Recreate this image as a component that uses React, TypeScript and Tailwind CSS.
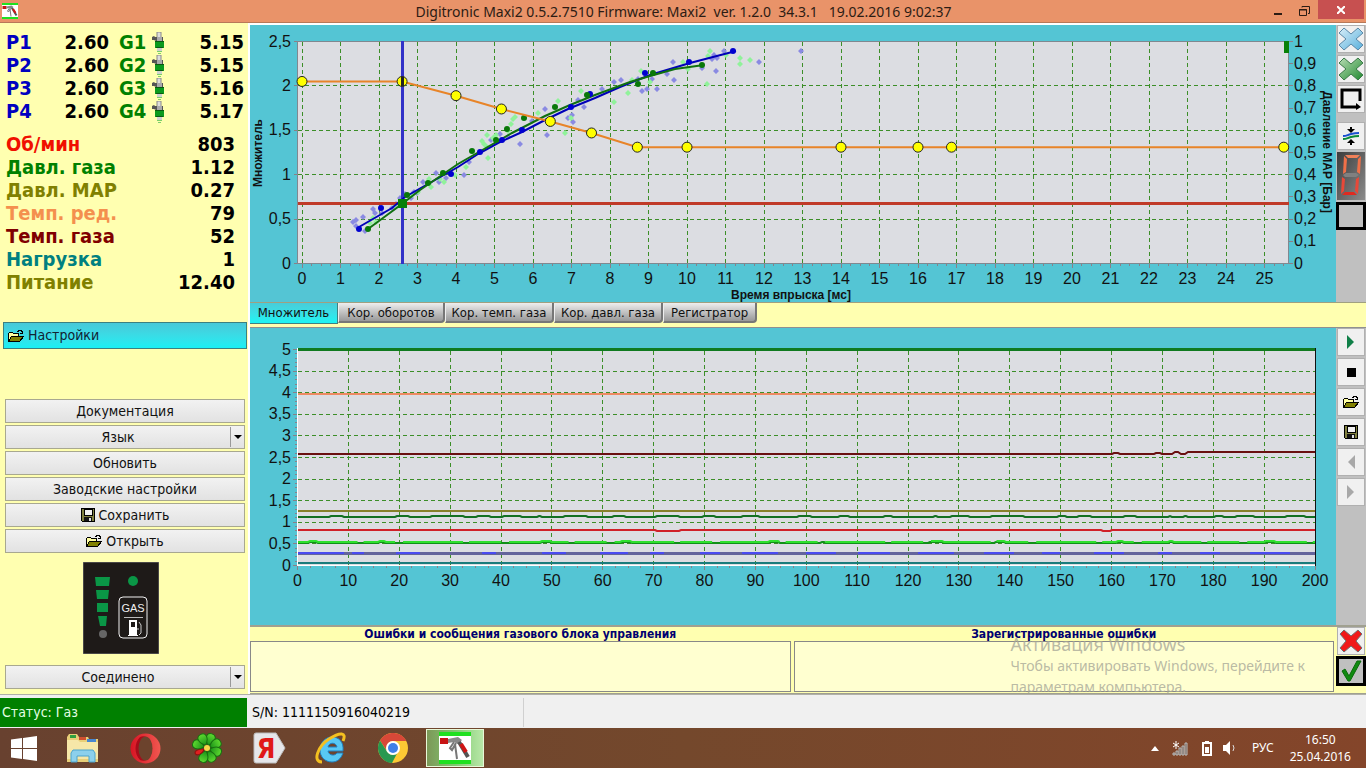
import type { ReactNode } from "react";

const UI = "font-['DejaVu_Sans_Condensed','Noto_Sans',sans-serif]";
const SEGOE = "font-['Noto_Sans','Open_Sans',sans-serif]";

type Point = [number, number];

const injectors = [
  { p: "P1", petrol: "2.60", g: "G1", gas: "5.15" },
  { p: "P2", petrol: "2.60", g: "G2", gas: "5.15" },
  { p: "P3", petrol: "2.60", g: "G3", gas: "5.16" },
  { p: "P4", petrol: "2.60", g: "G4", gas: "5.17" },
];

const readings = [
  { label: "Об/мин", value: "803", color: "text-[#f01000]" },
  { label: "Давл. газа", value: "1.12", color: "text-[#008000]" },
  { label: "Давл. МАР", value: "0.27", color: "text-[#808000]" },
  { label: "Темп. ред.", value: "79", color: "text-[#f4904e]" },
  { label: "Темп. газа", value: "52", color: "text-[#800000]" },
  { label: "Нагрузка", value: "1", color: "text-[#008080]" },
  { label: "Питание", value: "12.40", color: "text-[#808000]" },
];

/* ---------- icons ---------- */

function FolderIcon() {
  return (
    <svg width="16" height="14" viewBox="0 0 16 14" shapeRendering="crispEdges" aria-hidden="true">
      <path d="M0.5 12.5V4.5l1-1h3l1 1h5v3" fill="#ffffa0" stroke="#000" />
      <path d="M0.5 12.5l3-5h12l-4 5z" fill="#808000" stroke="#000" />
      <path d="M9 2.5h1l1-1h2l1 1v2M12 4.5h3M14.5 2v3" fill="none" stroke="#000" />
    </svg>
  );
}

function DiskIcon() {
  return (
    <svg width="14" height="14" viewBox="0 0 14 14" shapeRendering="crispEdges" aria-hidden="true">
      <path d="M0.5 0.5h13v13h-12l-1-1z" fill="#808040" stroke="#000" />
      <rect x="3" y="1" width="8" height="6" fill="#f0f0f0" stroke="#000" />
      <rect x="3" y="9" width="8" height="4" fill="#111" />
      <rect x="8" y="10" width="2" height="3" fill="#e0e0e0" />
    </svg>
  );
}

function InjectorIcon() {
  return (
    <svg width="13" height="22" viewBox="0 0 13 22" aria-hidden="true">
      <rect x="5" y="0" width="4" height="6" fill="#ddd" stroke="#888" />
      <path d="M0 5l2-1 1 1h8v4H4L2 8H0z" fill="#555" />
      <rect x="5" y="5" width="5" height="4" fill="#aaa" />
      <rect x="3" y="9" width="9" height="7" fill="#0b9a1d" />
      <path d="M3 9.500h9M4 15.500h7" stroke="#0a5a10" />
      <rect x="5" y="16" width="5" height="3" fill="#d0d0d0" />
      <path d="M5 19.500h5M6 21.500h3" stroke="#7ad06a" />
    </svg>
  );
}

function CrossIcon({ from, to, stroke, id }: { from: string; to: string; stroke: string; id: string }) {
  return (
    <svg width="26" height="26" viewBox="0 0 26 26" aria-hidden="true">
      <defs>
        <linearGradient id={id} x1="0" y1="0" x2="1" y2="1">
          <stop offset="0" stopColor={from} />
          <stop offset="1" stopColor={to} />
        </linearGradient>
      </defs>
      <path
        d="M6 2L1 7l7 6-7 6 5 5 7-6 7 6 5-5-7-6 7-6-5-5-7 6z"
        fill={`url(#${id})`}
        stroke={stroke}
        strokeLinejoin="round"
      />
    </svg>
  );
}

function LoopIcon() {
  return (
    <svg width="24" height="24" viewBox="0 0 24 24" aria-hidden="true">
      <path d="M21 14V3H3v17h15" fill="none" stroke="#000" strokeWidth="3" />
      <path d="M17 16l5 4-5 3z" fill="#000" />
    </svg>
  );
}

function MergeIcon() {
  return (
    <svg width="18" height="18" viewBox="0 0 18 18" aria-hidden="true">
      <path d="M9 0v3M9 18v-3" stroke="#000" strokeWidth="2" />
      <path d="M5 2h8L9 6zM5 16h8l-4-4z" fill="#000" />
      <path d="M1 9c4 0 4-1 8-2s4-1 8-1" fill="none" stroke="#1a4fd0" strokeWidth="2" />
      <path d="M1 12c4 0 4-1 8-2s4-1 8-1" fill="none" stroke="#0a8a3a" strokeWidth="2" />
    </svg>
  );
}

function DigitIcon() {
  return (
    <svg width="28" height="48" viewBox="0 0 28 48" aria-hidden="true">
      <defs>
        <linearGradient id="led-bg" x1="0" y1="0" x2="1" y2="1">
          <stop offset="0" stopColor="#3c3c3c" />
          <stop offset="1" stopColor="#8c8c8c" />
        </linearGradient>
      </defs>
      <rect width="28" height="48" fill="url(#led-bg)" />
      <path d="M8 3h15l-3 3h-9z" fill="#f08058" />
      <path d="M7 4l3 3-1 13-3 2zM24 4l-3 3-1 13 3 2z" fill="#f07048" />
      <path d="M6 23l3-2h10l3 2-3 2H8z" fill="#808080" />
      <path d="M5 25l3 2-1 12-3 3zM22 25l-3 2-1 12 3 3z" fill="#e84838" />
      <path d="M5 43l3-3h9l3 3z" fill="#e02a20" />
    </svg>
  );
}

function GunIcon({ size }: { size: number }) {
  return (
    <svg width={size} height={size} viewBox="0 0 32 32" aria-hidden="true">
      <rect width="32" height="32" fill="#fff" />
      <rect width="32" height="4" fill="#20e020" />
      <rect y="28" width="32" height="4" fill="#20e020" />
      <rect x="1" y="6" width="8" height="6" fill="#c81414" />
      <path d="M9 7l10-2 4 3-4 4-4-2-6 1z" fill="#888" />
      <path d="M15 10l-4 6 2 2 4-7M16 12l2 15" fill="none" stroke="#777" strokeWidth="2" />
      <path d="M20 10l9 15" stroke="#555" strokeWidth="4" />
      <path d="M22 12l5 8" stroke="#d01414" strokeWidth="4" />
    </svg>
  );
}

function FaultCrossIcon() {
  return (
    <svg width="26" height="26" viewBox="0 0 26 26" aria-hidden="true">
      <path d="M6 2L2 6l6 7-6 7 4 4 7-6 7 6 4-4-6-7 6-7-4-4-7 6z" fill="#f01818" stroke="#707070" />
    </svg>
  );
}

function CheckIcon() {
  return (
    <svg width="24" height="24" viewBox="0 0 24 24" aria-hidden="true">
      <path d="M3 12l3-2 4 7L18 2h4L11 22H9z" fill="#108a10" stroke="#0a6a0a" />
    </svg>
  );
}

/* ---------- charts ---------- */

const plotX = (v: number) => 302 + v * 38.5;
const plotY = (v: number) => 263.5 - v * 88.8;
const comma = (v: number) => String(v).replace(".", ",");
const toPoints = (pts: Point[]) => pts.map((p) => p.join(",")).join(" ");

const multiplier: Point[] = [
  [0, 2.05], [2.6, 2.05], [4, 1.89], [5.18, 1.74], [6.45, 1.6], [7.52, 1.47],
  [8.71, 1.31], [10, 1.31], [14, 1.31], [16, 1.31], [16.87, 1.31], [25.5, 1.31],
];

const petrolCurve: Point[] = [
  [359, 227], [392, 208], [405, 197], [458, 167], [478, 154], [498, 143], [522, 132],
  [545, 120], [568, 109], [595, 98], [620, 87], [650, 75], [690, 63], [736, 51],
];
const gasCurve: Point[] = [
  [368, 229], [402, 204], [420, 190], [458, 164], [498, 141], [512, 133],
  [545, 116], [570, 105], [595, 95], [630, 82], [650, 76], [675, 69], [704, 65],
];
const petrolDots: Point[] = [
  [359, 229], [381, 208], [451, 174], [480, 152], [502, 140], [522, 130], [571, 107], [590, 94], [645, 73], [689, 62], [733, 51],
];
const gasDots: Point[] = [
  [368, 229], [407, 195], [428, 183], [443, 173], [472, 151], [496, 140], [507, 129], [524, 118], [555, 107], [587, 95], [638, 84], [653, 73], [702, 65],
];
const petrolCloud: Point[] = [
  [353, 222], [356, 220], [363, 217], [356, 226], [365, 231], [373, 209], [375, 213], [392, 208], [396, 204], [400, 198], [405, 194], [414, 192],
  [423, 182], [429, 183], [436, 173], [439, 182], [446, 178], [464, 175], [469, 162], [491, 140], [500, 134], [508, 137], [520, 144], [532, 121],
  [545, 109], [547, 135], [568, 118], [572, 115], [573, 122], [578, 100], [584, 107], [602, 89], [614, 82], [621, 80], [638, 79], [642, 91],
  [647, 89], [657, 89], [652, 79], [667, 74], [674, 80], [673, 62], [702, 68], [712, 59], [716, 71], [714, 55], [717, 58], [724, 51],
  [759, 62], [801, 51], [382, 213], [411, 198], [417, 193],
];
const gasCloud: Point[] = [
  [370, 223], [373, 218], [376, 222], [395, 205], [412, 195], [418, 192], [429, 179], [431, 187], [440, 179], [444, 182], [455, 175], [466, 167],
  [482, 141], [484, 144], [487, 135], [487, 147], [488, 158], [493, 138], [496, 135], [508, 131], [511, 124], [513, 119], [515, 117], [538, 113],
  [558, 101], [565, 133], [571, 118], [581, 91], [614, 102], [628, 93], [632, 80], [641, 71], [650, 82], [683, 62], [688, 69], [707, 84],
  [708, 56], [710, 51], [740, 58], [740, 64], [750, 60], [726, 55],
];

// small rhombus marker centred on a point
const rhombs = (pts: Point[], r: number) =>
  pts.map(([x, y]) => `M${x - r} ${y}L${x} ${y - r}L${x + r} ${y}L${x} ${y + r}z`).join("");

function MultiplierChart() {
  const xs = Array.from({ length: 26 }, (_, i) => i);
  const left = [0, 0.5, 1, 1.5, 2, 2.5];
  const right = Array.from({ length: 11 }, (_, i) => i / 10);
  return (
    <svg
      viewBox="250 25 1086 277"
      className="block h-auto w-full bg-[#54c5d4] font-['Liberation_Sans',Arial,sans-serif]"
      role="img"
      aria-label="Множитель"
    >
      <rect x="297.500" y="41.500" width="991" height="222" fill="#dcdde2" stroke="#808890" />
      <g stroke="#3c8e28" strokeDasharray="4 3" shapeRendering="crispEdges">
        {xs.map((v) => <line key={v} x1={plotX(v)} x2={plotX(v)} y1="42" y2="263" />)}
        {left.slice(1, 5).map((v) => <line key={v} x1="298" x2="1288" y1={plotY(v)} y2={plotY(v)} />)}
      </g>
      <g stroke="#8a7f88" shapeRendering="crispEdges">
        {Array.from({ length: 103 }, (_, i) => (
          <line key={i} x1={plotX(i / 4)} x2={plotX(i / 4)} y1="264" y2={i % 4 ? 266 : 268} />
        ))}
        {left.map((v) => <line key={v} x1="294" x2="297" y1={plotY(v)} y2={plotY(v)} />)}
        {right.map((v) => <line key={v} x1="1289" x2="1293" y1={plotY(v * 2.5)} y2={plotY(v * 2.5)} />)}
      </g>
      <g fontSize="16" fill="#111">
        {xs.map((v) => <text key={v} x={plotX(v)} y="284" textAnchor="middle">{v}</text>)}
        {left.map((v) => <text key={v} x="291" y={plotY(v) + 5} textAnchor="end">{comma(v)}</text>)}
        {right.map((v) => <text key={v} x="1294" y={plotY(v * 2.5) + 5}>{comma(v)}</text>)}
      </g>
      <g fontSize="12" fontWeight="bold" fill="#111">
        <text x="791" y="299" textAnchor="middle">Время впрыска [мс]</text>
        <text transform="translate(262 153) rotate(-90)" textAnchor="middle">Множитель</text>
        <text transform="translate(1323 152) rotate(90)" textAnchor="middle">Давление МАР [Бар]</text>
      </g>
      <path d={rhombs(petrolCloud, 3)} fill="#8a8ae2" />
      <path d={rhombs(gasCloud, 3)} fill="#90f29a" />
      <line x1="298" x2="1289" y1="203.500" y2="203.500" stroke="#c03a28" strokeWidth="3" />
      <line x1="402.500" x2="402.500" y1="41" y2="264" stroke="#3232c8" strokeWidth="3" />
      <polyline points={toPoints(petrolCurve)} fill="none" stroke="#0000b8" strokeWidth="2" />
      <polyline points={toPoints(gasCurve)} fill="none" stroke="#107010" strokeWidth="2" />
      {petrolDots.map(([x, y]) => <circle key={x} cx={x} cy={y} r="3" fill="#0000d0" />)}
      {gasDots.map(([x, y]) => <circle key={x} cx={x} cy={y} r="3" fill="#087808" />)}
      <rect x="398" y="199" width="9" height="9" fill="#088008" />
      <rect x="1284" y="41" width="5" height="12" fill="#088008" />
      <polyline points={toPoints(multiplier.map(([x, y]) => [plotX(x), plotY(y)]))} fill="none" stroke="#e88428" strokeWidth="2" />
      {multiplier.map(([x, y]) => (
        <circle key={x} cx={plotX(x)} cy={plotY(y)} r="5" fill="#ffff00" stroke="#222" />
      ))}
      <line x1="402.500" x2="402.500" y1="77" y2="86" stroke="#222" strokeWidth="3" />
    </svg>
  );
}

const logX = (v: number) => 297.5 + v * 5.0875;
const logY = (v: number) => 565.5 - v * 43.2;

const gasPressureBumps: Point[] = [
  [329, 344], [395, 410], [430, 465], [476, 491], [502, 522], [537, 542], [563, 588], [612, 626], [655, 680], [702, 716], [741, 760], [797, 812], [838, 850],
  [883, 893], [933, 938], [950, 970], [990, 1025], [1057, 1067], [1077, 1092], [1123, 1137], [1168, 1172], [1183, 1188], [1214, 1224], [1235, 1255], [1285, 1306],
];
const gasTimeBumps: Point[] = [
  [308, 318], [378, 386], [540, 552], [620, 632], [768, 780], [820, 826], [928, 944], [994, 1006], [1116, 1124], [1168, 1174], [1264, 1276],
];
const petrolSegments: Point[] = [
  [298, 344], [352, 364], [396, 420], [482, 496], [542, 566], [600, 628], [650, 664], [700, 720], [742, 778], [806, 836], [858, 890],
  [918, 954], [984, 1014], [1042, 1060], [1094, 1124], [1158, 1172], [1200, 1220], [1250, 1290],
];

function wave(base: number, bumps: Point[], lift: number) {
  return `M298 ${base}` + bumps.map(([a, b]) => `H${a}l2 ${-lift}H${b - 2}l2 ${lift}`).join("") + "H1315";
}

function RecorderChart() {
  const xs = Array.from({ length: 21 }, (_, i) => i * 10);
  const ys = Array.from({ length: 11 }, (_, i) => i / 2);
  return (
    <svg
      viewBox="250 328 1086 297"
      className="block h-auto w-full bg-[#54c5d4] font-['Liberation_Sans',Arial,sans-serif]"
      role="img"
      aria-label="Регистратор"
    >
      <rect x="298" y="348" width="1017" height="217" fill="#dcdde2" />
      <g stroke="#3c8e28" strokeDasharray="4 3" shapeRendering="crispEdges">
        {xs.slice(1, 20).map((v) => <line key={v} x1={logX(v)} x2={logX(v)} y1="351" y2="565" />)}
        {ys.slice(1, 10).map((v) => <line key={v} x1="298" x2="1315" y1={logY(v)} y2={logY(v)} />)}
      </g>
      <g stroke="#8a7f88" shapeRendering="crispEdges">
        {Array.from({ length: 81 }, (_, i) => (
          <line key={i} x1={logX(i * 2.5)} x2={logX(i * 2.5)} y1="566" y2={i % 4 ? 568 : 570} />
        ))}
        {Array.from({ length: 51 }, (_, i) => (
          <line key={i} x1={i % 5 ? 295 : 293} x2="297" y1={logY(i / 10)} y2={logY(i / 10)} />
        ))}
      </g>
      <path d="M297.500 348v218M297 565.500h1018" stroke="#fff" fill="none" />
      <path d="M1315.500 348v218" stroke="#111" />
      <g fontSize="16" fill="#111">
        {xs.map((v) => <text key={v} x={logX(v)} y="586" textAnchor="middle">{v}</text>)}
        {ys.map((v) => <text key={v} x="291" y={logY(v) + 5} textAnchor="end">{comma(v)}</text>)}
      </g>
      <g fill="none" strokeWidth="2">
        <path d="M298 349.500H1315" stroke="#107a20" strokeWidth="3" />
        <path d="M298 394H1315" stroke="#ee8a62" />
        <path d="M298 454H1112l2-1h4l2 1h34l2-1h4l2 1h10l3-2h3l3 2h4l3-2H1315" stroke="#6a1010" />
        <path d="M298 511H1315" stroke="#86802a" />
        <path d={wave(517, gasPressureBumps, 1)} stroke="#127022" />
        <path d="M298 530H655l2 1h22l2-1H1101l2 1h7l2-1H1315" stroke="#d02028" />
        <path d={wave(543, gasTimeBumps, 1)} stroke="#109018" />
        <path d={wave(542, gasTimeBumps, 1)} stroke="#2ee02e" strokeDasharray="60 6 32 8" />
        <path d="M298 553.500H1315" stroke="#64649c" strokeWidth="3" />
        <path d={petrolSegments.map(([a, b]) => `M${a} 553H${b}`).join("")} stroke="#4a4af0" />
        <path d="M298 563H1315" stroke="#1a7c7c" />
      </g>
    </svg>
  );
}

/* ---------- controls ---------- */

function PanelButton({ children, menu }: { children: ReactNode; menu?: boolean }) {
  return (
    <button
      type="button"
      className="flex h-6 w-full items-center border border-[#a8a890] bg-linear-to-b from-[#f2f2f2] to-[#e2e2e2] text-[14px] text-[#111]"
    >
      <span className="flex flex-1 items-center justify-center gap-1">{children}</span>
      {menu && (
        <span className="flex h-5 w-[14px] items-center justify-center border-l border-[#999]">
          <svg width="8" height="4" viewBox="0 0 8 4" aria-hidden="true"><path d="M0 0h8L4 4z" /></svg>
        </span>
      )}
    </button>
  );
}

function ToolButton({ label, children }: { label: string; children: ReactNode }) {
  return (
    <button
      type="button"
      aria-label={label}
      className="flex h-7 w-7 items-center justify-center border border-[#b0b0b0] bg-[#f0f0f0]"
    >
      {children}
    </button>
  );
}

function Sidebar() {
  return (
    <aside className="w-[248px] shrink-0 bg-[#ffffb0] pt-2 pr-[3px] pl-[5px]">
      <table className="w-full table-fixed text-[20px] leading-[23px] font-bold">
        <tbody>
          {injectors.map((row) => (
            <tr key={row.p}>
              <th scope="row" className="w-[38px] p-0 pl-px text-left text-[#0000c0]">{row.p}</th>
              <td className="w-[66px] p-0 text-right">{row.petrol}</td>
              <th scope="row" className="w-[43px] p-0 pl-[10px] text-left text-[#008000]">{row.g}</th>
              <td className="w-[18px] p-0"><InjectorIcon /></td>
              <td className="p-0 pr-px text-right">{row.gas}</td>
            </tr>
          ))}
        </tbody>
      </table>
      <table className="mt-[10px] w-full text-[20px] leading-[23px] font-bold">
        <tbody>
          {readings.map((row) => (
            <tr key={row.label}>
              <th scope="row" className={`p-0 pl-px text-left ${row.color}`}>{row.label}</th>
              <td className="p-0 pr-[10px] text-right">{row.value}</td>
            </tr>
          ))}
        </tbody>
      </table>
      <button
        type="button"
        className="-mx-[2px] mt-7 flex h-[27px] w-[244px] items-center gap-1 border border-[#3c8080] bg-linear-to-b from-[#48c8d8] to-[#18f0f4] pl-1 text-[14px] text-[#123]"
      >
        <FolderIcon />
        Настройки
      </button>
      <div className="mt-[50px] flex flex-col gap-[2px]">
        <PanelButton>Документация</PanelButton>
        <PanelButton menu>Язык</PanelButton>
        <PanelButton>Обновить</PanelButton>
        <PanelButton>Заводские настройки</PanelButton>
        <PanelButton><DiskIcon />Сохранить</PanelButton>
        <PanelButton><FolderIcon />Открыть</PanelButton>
      </div>
      <div className="mt-[9px] mb-[11px] flex justify-center pr-2">
        <svg width="76" height="92" viewBox="0 0 76 92" role="img" aria-label="GAS">
          <rect width="76" height="92" fill="#1e1a18" stroke="#777" />
          <g fill="#0a9646">
            <path d="M12 15h15l-1 9H13zM13 28h13l-1 9H14zM14 41h11v9H14zM15 54h9l-1 10h-6z" />
            <circle cx="50" cy="19" r="5" />
          </g>
          <circle cx="20" cy="72" r="4" fill="#666" />
          <rect x="36" y="35" width="28" height="41" rx="4" fill="none" stroke="#f0f0f0" />
          <text x="50" y="50" fontSize="11" textAnchor="middle" fill="#f0f0f0" className="font-['Liberation_Sans',sans-serif]">GAS</text>
          <path d="M41 55.500h19" stroke="#bbb" />
          <path d="M46 73V58h8v15h1v1H45v-1z" fill="#fff" />
          <rect x="48" y="60" width="4" height="5" fill="#1e1a18" />
          <path d="M56 60l2 3v8l-2 2M54 67h2" fill="none" stroke="#ccc" />
        </svg>
      </div>
      <PanelButton menu>Соединено</PanelButton>
    </aside>
  );
}

const tabs = [
  { label: "Множитель", width: "w-[88px]" },
  { label: "Кор. оборотов", width: "w-[107px]" },
  { label: "Кор. темп. газа", width: "w-[109px]" },
  { label: "Кор. давл. газа", width: "w-[109px]" },
  { label: "Регистратор", width: "w-[94px]" },
];

function Tabs() {
  return (
    <div role="tablist" className="flex h-[26px] border-t border-b border-[#a0a080] border-b-[#909090] bg-[#ffffb0] text-[13px] text-[#111]">
      {tabs.map((tab, i) => (
        <button
          key={tab.label}
          type="button"
          role="tab"
          aria-selected={i === 0}
          className={
            i === 0
              ? `${tab.width} h-[21px] border-r border-b border-[#408080] bg-linear-to-b from-[#48ccd8] to-[#18f4f4]`
              : `${tab.width} h-5 rounded-br-sm border-r-2 border-b-2 border-l border-[#777] border-l-[#eee] bg-linear-to-b from-[#eee] to-[#999]`
          }
        >
          {tab.label}
        </button>
      ))}
    </div>
  );
}

function Messages() {
  return (
    <section className="relative flex flex-1 overflow-hidden border-t-2 border-b border-[#a0a090] bg-[#ffffb0]">
      <div className="grid flex-1 grid-cols-2 gap-[3px] pr-[2px] pb-px text-[12px] font-bold text-[#000070]">
        <div className="flex flex-col">
          <label htmlFor="ecu-messages" className="text-center leading-[14px]">
            Ошибки и сообщения газового блока управления
          </label>
          <textarea id="ecu-messages" readOnly className="block w-full flex-1 resize-none border border-[#888] bg-[#ffffd0]" />
        </div>
        <div className="flex flex-col">
          <label htmlFor="stored-errors" className="text-center leading-[14px]">Зарегистрированные ошибки</label>
          <textarea id="stored-errors" readOnly className="block w-full flex-1 resize-none border border-[#888] bg-[#ffffd0]" />
        </div>
      </div>
      <div className="flex w-[30px] flex-col items-center">
        <ToolButton label="Сбросить ошибки"><FaultCrossIcon /></ToolButton>
        <button type="button" aria-label="Подтвердить" className="mt-px flex h-[30px] w-[30px] items-center justify-center border-3 border-black bg-[#c0c0c0]">
          <CheckIcon />
        </button>
      </div>
      <div className={`pointer-events-none absolute top-[7px] right-[61px] text-[14px] leading-[21px] whitespace-nowrap text-[#a8a898]/80 ${SEGOE}`}>
        <p className="text-[18px]">Активация Windows</p>
        <p>Чтобы активировать Windows, перейдите к</p>
        <p>параметрам компьютера.</p>
      </div>
    </section>
  );
}

function Workspace() {
  return (
    <main className="flex min-w-0 flex-1 flex-col border-t-2 border-l-2 border-white">
      <div className="flex">
        <div className="min-w-0 flex-1"><MultiplierChart /></div>
        <div className="flex w-[30px] flex-col items-center gap-[2px] bg-[#c0c0c0]">
          <ToolButton label="Удалить точки бензина"><CrossIcon id="cross-blue" from="#d8eef8" to="#58b0dc" stroke="#5a88a8" /></ToolButton>
          <ToolButton label="Удалить точки газа"><CrossIcon id="cross-green" from="#b8dcb4" to="#208a30" stroke="#3a7a48" /></ToolButton>
          <ToolButton label="Повтор"><LoopIcon /></ToolButton>
          <div className="mt-[7px]"><ToolButton label="Совместить"><MergeIcon /></ToolButton></div>
          <button type="button" aria-label="Индикатор"><DigitIcon /></button>
          <button type="button" aria-label="Цвет" className="h-7 w-[30px] shrink-0 border-3 border-black bg-[#c0c0c0]" />
        </div>
      </div>
      <Tabs />
      <div className="flex">
        <div className="min-w-0 flex-1"><RecorderChart /></div>
        <div className="flex w-[30px] flex-col items-center gap-[2px] bg-[#c0c0c0]">
          <ToolButton label="Пуск"><svg width="8" height="14" viewBox="0 0 8 14"><path d="M0 0l7 7-7 7z" fill="#108048" /></svg></ToolButton>
          <ToolButton label="Стоп"><svg width="9" height="9" viewBox="0 0 9 9"><path d="M0 0h9v9H0z" /></svg></ToolButton>
          <ToolButton label="Открыть запись"><FolderIcon /></ToolButton>
          <ToolButton label="Сохранить запись"><DiskIcon /></ToolButton>
          <ToolButton label="Назад"><svg width="8" height="14" viewBox="0 0 8 14"><path d="M8 0v14L1 7z" fill="#a8a8a8" /></svg></ToolButton>
          <ToolButton label="Вперёд"><svg width="8" height="14" viewBox="0 0 8 14"><path d="M0 0v14l7-7z" fill="#a8a8a8" /></svg></ToolButton>
        </div>
      </div>
      <Messages />
    </main>
  );
}

/* ---------- taskbar ---------- */

function WindowsLogo() {
  return (
    <svg width="26" height="25" viewBox="0 0 26 25" aria-hidden="true">
      <path d="M0 3.500L11 2v10H0zM12 2l14-2v12H12zM0 13h11v10L0 21.500zM12 13h14v12l-14-2z" fill="#fff" />
    </svg>
  );
}

function ExplorerLogo() {
  return (
    <svg width="34" height="30" viewBox="0 0 34 30" aria-hidden="true">
      <path d="M1 4l2-3h8l2 3h9l1 2h9v23H1z" fill="#e8cf78" />
      <path d="M4 2h6v3H4z" fill="#30a040" />
      <path d="M13 4h7v3h-7z" fill="#d05030" />
      <path d="M21 6h9v3h-9z" fill="#4888d0" />
      <path d="M1 7h11l2 2h18v17H1z" fill="#f6e7a8" />
      <path d="M5 29v-9l2-3h20l2 3v9h-6v-6H11v6z" fill="#8cd0ec" stroke="#4ca4cc" />
    </svg>
  );
}

function OperaLogo() {
  return (
    <svg width="31" height="31" viewBox="0 0 31 31" aria-hidden="true">
      <defs>
        <linearGradient id="opera" x1="0" y1="0" x2="1" y2="0">
          <stop offset="0" stopColor="#d81424" />
          <stop offset="1" stopColor="#f05850" />
        </linearGradient>
      </defs>
      <circle cx="15.500" cy="15.500" r="15" fill="url(#opera)" />
      <path d="M10 4C4 10 4 21 10 27c6 3 12-3 12-11.500S16 1 10 4z" fill="#a80c1a" />
      <ellipse cx="15.500" cy="15.500" rx="7" ry="12" fill="#6c432d" />
    </svg>
  );
}

function IcqLogo() {
  return (
    <svg width="32" height="32" viewBox="-16 -16 32 32" aria-hidden="true">
      <defs>
        <linearGradient id="petal" x1="0" y1="0" x2="0" y2="1">
          <stop offset="0" stopColor="#60dc30" />
          <stop offset="1" stopColor="#189018" />
        </linearGradient>
      </defs>
      {[0, 45, 90, 135, 180, 225, 270, 315].map((a) => (
        <path
          key={a}
          d={a === 225 ? "M0-3C-4-7-3-13 0-13s3 6 0 10z" : "M0-3C-6-8-6-15 0-15s6 7 0 12z"}
          transform={`rotate(${a + 20})`}
          fill={a === 225 ? "#e02020" : "url(#petal)"}
          stroke={a === 225 ? "#901010" : "#187010"}
        />
      ))}
      <circle r="3" fill="#f8d848" />
    </svg>
  );
}

function YandexLogo() {
  return (
    <svg width="33" height="32" viewBox="0 0 33 32" aria-hidden="true">
      <path d="M3 1h20l9 15-9 15H3q-2 0-2-2V3q0-2 2-2z" fill="#e6e6ea" stroke="#bbb" />
      <text x="13" y="26" fontSize="27" fontWeight="bold" textAnchor="middle" fill="#e01818" className="font-['DejaVu_Sans_Condensed',sans-serif]">Я</text>
    </svg>
  );
}

function IeLogo() {
  return (
    <svg width="32" height="32" viewBox="0 0 32 32" aria-hidden="true">
      <path
        fillRule="evenodd"
        d="M17 5c7 0 12 5 11 14H13c1 5 7 5 9 2h6c-2 6-6 9-11 9C10 30 5 25 5 18S10 5 17 5zM13 15h9c-1-5-8-5-9 0z"
        fill="#58c8f4"
        stroke="#2080c0"
      />
      <path d="M7 30C-3 30 3 14 14 7S32 0 28 9" fill="none" stroke="#f4c020" strokeWidth="3" />
    </svg>
  );
}

function ChromeLogo() {
  return (
    <svg width="30" height="30" viewBox="0 0 30 30" aria-hidden="true">
      <circle cx="15" cy="15" r="15" fill="#fcc934" />
      <path d="M2 7.500a15 15 0 0 1 26.300.5H15a7 7 0 0 0-6 10z" fill="#d84838" />
      <path d="M2 7.500l7 11a7 7 0 0 0 10 2L14 30A15 15 0 0 1 2 7.500z" fill="#289850" />
      <circle cx="15" cy="15" r="7" fill="#fff" />
      <circle cx="15" cy="15" r="5" fill="#4080e8" />
    </svg>
  );
}

const pinned = [
  { name: "Проводник", icon: <ExplorerLogo /> },
  { name: "Opera", icon: <OperaLogo /> },
  { name: "ICQ", icon: <IcqLogo /> },
  { name: "Яндекс", icon: <YandexLogo /> },
  { name: "Internet Explorer", icon: <IeLogo /> },
  { name: "Chrome", icon: <ChromeLogo /> },
];

function Taskbar() {
  return (
    <footer className={`flex h-10 items-center bg-linear-to-r from-[#68412f] via-[#74482c] to-[#84452a] text-white ${SEGOE}`}>
      <button type="button" aria-label="Пуск" className="flex h-10 w-[52px] items-center pl-[11px]"><WindowsLogo /></button>
      {pinned.map((app) => (
        <button key={app.name} type="button" aria-label={app.name} className="flex h-10 w-[62px] items-center justify-center">
          {app.icon}
        </button>
      ))}
      <button
        type="button"
        aria-label="Digitronic"
        className="ml-[2px] flex h-[38px] w-[58px] items-center justify-center border border-[#e8f8d8] bg-linear-to-r from-[#7c9858] via-[#80c870] to-[#b8e8a8]"
      >
        <GunIcon size={32} />
      </button>
      <div className="ml-auto flex items-center pr-[15px] text-[12px]">
        <svg width="8" height="5" viewBox="0 0 8 5" aria-hidden="true"><path d="M0 5h8L4 0z" fill="#fff" /></svg>
        <svg className="ml-[13px]" width="17" height="15" viewBox="0 0 17 15" aria-hidden="true">
          <path d="M1 12h2v2H1zM4 10h2v4H4zM7 7h2v7H7zM10 5h2v9h-2zM13 2h2v12h-2z" fill="#6c5a50" stroke="#bbb" />
          <path d="M4 0v8M1 2l6 4M7 2L1 6" stroke="#fff" />
        </svg>
        <svg className="ml-[13px]" width="10" height="15" viewBox="0 0 10 15" aria-hidden="true">
          <path d="M3 0h4v2H3z" fill="#fff" />
          <rect x="1" y="2" width="8" height="12" fill="none" stroke="#fff" strokeWidth="2" />
          <path d="M3 6h4v6H3z" fill="#fff" />
        </svg>
        <svg className="ml-[11px]" width="13" height="14" viewBox="0 0 13 14" aria-hidden="true">
          <path d="M0 4h3l4-4v14l-4-4H0z" fill="#fff" />
          <path d="M10 4q2 3 0 6" fill="none" stroke="#ddd" />
        </svg>
        <span className="ml-4">РУС</span>
        <time className="ml-4 text-center leading-[17px]">16:50<br />25.04.2016</time>
      </div>
    </footer>
  );
}

export default function App() {
  return (
    <div className={`flex min-h-screen flex-col bg-[#f0f0f0] text-black ${UI}`}>
      <header className={`flex h-[23px] items-center border-b border-[#b87858] bg-[#e99369] text-[14px] text-[#2c1c14] ${SEGOE}`}>
        <span className="pl-[2px]"><GunIcon size={16} /></span>
        <h1 className="flex-1 pl-[84px] text-center whitespace-pre">
          {"Digitronic Maxi2 0.5.2.7510 Firmware: Maxi2  ver. 1.2.0  34.3.1   19.02.2016 9:02:37"}
        </h1>
        <button type="button" aria-label="Свернуть" className="flex h-5 w-[26px] items-center justify-center">
          <svg width="8" height="10" viewBox="0 0 8 10"><path d="M0 7h8v2H0z" fill="#2c1c14" /></svg>
        </button>
        <button type="button" aria-label="Развернуть" className="flex h-5 w-[27px] items-center justify-center">
          <svg width="11" height="11" viewBox="0 0 11 11" fill="none" stroke="#2c1c14">
            <path d="M0.500 3.500h7v6h-7zM3 1.500V.5h7.500v7H9M0 4h8" />
          </svg>
        </button>
        <button type="button" aria-label="Закрыть" className="mr-[2px] flex h-[19px] w-[46px] items-center justify-center self-start bg-[#c75050]">
          <svg width="8" height="8" viewBox="0 0 8 8"><path d="M0 0l8 8M8 0L0 8" stroke="#fff" strokeWidth="2" /></svg>
        </button>
      </header>
      <div className="flex flex-1">
        <Sidebar />
        <Workspace />
      </div>
      <div className="flex h-[34px] items-center border-t border-[#b0b0a8] pt-[3px] pb-px text-[14px]">
        <p className="flex h-full w-[247px] items-center bg-[#008000] pl-[2px] text-[#e4ffe4]">Статус: Газ</p>
        <p className="flex h-full w-[277px] items-center border-r border-[#d0d0d0] pl-[5px]">S/N: 1111150916040219</p>
      </div>
      <Taskbar />
    </div>
  );
}
